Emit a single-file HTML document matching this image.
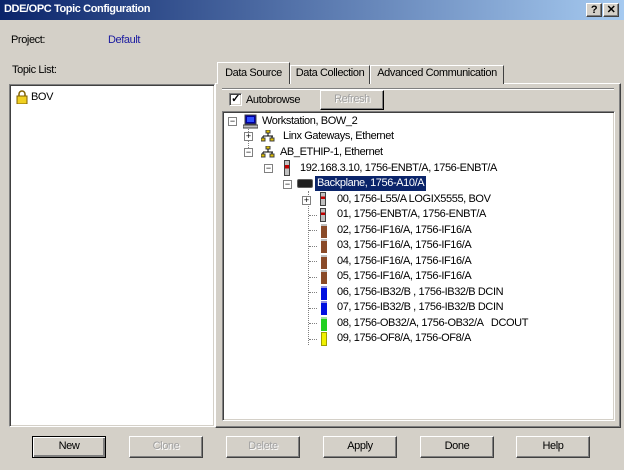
<!DOCTYPE html>
<html><head><style>
*{margin:0;padding:0;box-sizing:border-box}
body{width:624px;height:470px;background:#d4d0c8;font:11px "Liberation Sans",sans-serif;letter-spacing:-0.4px;color:#000;position:relative;overflow:hidden}
.a{position:absolute;white-space:nowrap}
.sunk{position:absolute;background:#fff;border:1px solid;border-color:#808080 #fff #fff #808080;box-shadow:inset 1px 1px 0 #404040,inset -1px -1px 0 #d4d0c8}
.raised{position:absolute;border:1px solid;border-color:#fff #404040 #404040 #fff;box-shadow:inset -1px -1px 0 #808080}
.btn{position:absolute;top:436px;width:74px;height:22px;background:#d4d0c8;border:1px solid;border-color:#fff #404040 #404040 #fff;box-shadow:inset -1px -1px 0 #808080;text-align:center;line-height:19px}
.dis{color:#a0a0a0;text-shadow:1px 1px 0 #fff}
.tab{position:absolute;top:65px;height:19px;border:1px solid;border-bottom:none;border-color:#fff #404040 #fff #fff;line-height:15px;text-align:center;background:#d4d0c8}
.row{position:absolute;height:15px;line-height:15px}
.pm{position:absolute;width:9px;height:9px;border:1px solid #808080;background:#fff;font-size:9px;line-height:7px;text-align:center;color:#000;letter-spacing:0}
.mod{position:absolute;width:6px;height:14px}
.dl{position:absolute;border-left:1px dotted #808080}
.dh{position:absolute;border-top:1px dotted #808080;width:8px}
</style></head><body>
<div class="a" style="left:0;top:0;width:624px;height:20px;background:linear-gradient(90deg,#0a246a,#a6caf0)"></div>
<div class="a" style="left:4px;top:3px;color:#fff;font-weight:bold;font-size:11px">DDE/OPC Topic Configuration</div>
<div class="raised" style="left:586px;top:3px;width:16px;height:14px;background:#d4d0c8;text-align:center;font-weight:bold;line-height:12px">?</div>
<div class="raised" style="left:603px;top:3px;width:16px;height:14px;background:#d4d0c8;text-align:center;font-weight:bold;line-height:12px">✕</div>
<div class="a" style="left:11px;top:34px">Project:</div>
<div class="a" style="left:108px;top:34px;color:#1a1aa0">Default</div>
<div class="a" style="left:12px;top:64px">Topic List:</div>
<div class="sunk" style="left:9px;top:84px;width:206px;height:343px"></div>
<div class="a" style="left:16px;top:90px;width:12px;height:14px"><svg width="12" height="14"><path d="M3 6V4a3 3 0 0 1 6 0v2" stroke="#806000" stroke-width="1.5" fill="none"/><rect x="1" y="6" width="10" height="8" fill="#f0d020" stroke="#806000"/></svg></div>
<div class="a" style="left:31px;top:91px">BOV</div>
<div class="raised" style="left:215px;top:83px;width:406px;height:345px;border-top:1px solid #fff"></div>
<div class="tab" style="left:290px;width:80px">Data Collection</div>
<div class="tab" style="left:370px;width:134px;border-right-color:#404040">Advanced Communication</div>
<div class="tab" style="left:217px;top:62px;width:73px;height:22px;line-height:20px;z-index:2">Data Source</div>
<div class="a" style="left:222px;top:88px;width:392px;border-top:1px solid #808080;border-bottom:1px solid #fff;height:2px"></div>
<div class="sunk" style="left:229px;top:93px;width:13px;height:13px;font-size:11px;line-height:10px;text-align:center;font-weight:bold">✓</div>
<div class="a" style="left:246px;top:94px">Autobrowse</div>
<div class="raised" style="left:320px;top:90px;width:64px;height:20px;text-align:center;line-height:17px;border-color:#fff #000 #000 #fff"><span class="dis">Refresh</span></div>
<div class="sunk" style="left:222px;top:111px;width:393px;height:310px"></div>

<div class="pm" style="left:228px;top:117px">−</div>
<div class="a" style="left:243px;top:114px"><svg width="15" height="15"><rect x="2" y="1" width="11" height="9" fill="#0000a0" stroke="#404040"/><rect x="4" y="3" width="7" height="5" fill="#3050ff"/><rect x="0" y="11" width="15" height="3" fill="#c0c0c0" stroke="#404040"/></svg></div>
<div class="row" style="left:262px;top:114px">Workstation, BOW_2</div>
<div class="dl" style="left:248px;top:129px;height:27px"></div>
<div class="pm" style="left:244px;top:132px">+</div>
<div class="a" style="left:261px;top:130px"><svg width="14" height="13"><g fill="#e0c000" stroke="#404040"><rect x="5" y="0" width="4" height="3"/><rect x="0" y="8" width="4" height="3"/><rect x="9" y="8" width="4" height="3"/></g><path d="M7 3v3M2 6h10M2 6v2M11 6v2" stroke="#000"/></svg></div>
<div class="row" style="left:283px;top:129px">Linx Gateways, Ethernet</div>
<div class="pm" style="left:244px;top:148px">−</div>
<div class="a" style="left:261px;top:146px"><svg width="14" height="13"><g fill="#e0c000" stroke="#404040"><rect x="5" y="0" width="4" height="3"/><rect x="0" y="8" width="4" height="3"/><rect x="9" y="8" width="4" height="3"/></g><path d="M7 3v3M2 6h10M2 6v2M11 6v2" stroke="#000"/></svg></div>
<div class="row" style="left:280px;top:145px">AB_ETHIP-1, Ethernet</div>
<div class="pm" style="left:264px;top:164px">−</div>
<div class="a" style="left:284px;top:160px;width:6px;height:16px;background:linear-gradient(#c0c0c0 0 30%,#c00000 30% 55%,#c0c0c0 55%);border:1px solid #404040"></div>
<div class="row" style="left:300px;top:161px">192.168.3.10, 1756-ENBT/A, 1756-ENBT/A</div>
<div class="pm" style="left:283px;top:180px">−</div>
<div class="a" style="left:297px;top:179px;width:16px;height:9px;background:#202020;border-radius:2px;border:1px solid #606060"></div>
<div class="row" style="left:315px;top:176px;background:#0a246a;color:#fff;padding:0 2px">Backplane, 1756-A10/A</div>
<div class="dl" style="left:308px;top:191px;height:154px"></div>
<div class="pm" style="left:302px;top:196px">+</div>

<div class="mod" style="left:320px;top:192px;background:linear-gradient(#c0c0c0 0 30%,#c00000 30% 50%,#c0c0c0 50%);border:1px solid #404040"></div>
<div class="row" style="left:337px;top:192px">00, 1756-L55/A LOGIX5555, BOV</div>
<div class="dh" style="left:309px;top:215px"></div>
<div class="mod" style="left:320px;top:208px;background:linear-gradient(#c0c0c0 0 30%,#c00000 30% 50%,#c0c0c0 50%);border:1px solid #404040"></div>
<div class="row" style="left:337px;top:207px">01, 1756-ENBT/A, 1756-ENBT/A</div>
<div class="dh" style="left:309px;top:230px"></div><div class="mod" style="left:321px;top:224px;background:#8a4a28;border-top:2px solid #c0c0c0"></div>
<div class="row" style="left:337px;top:223px">02, 1756-IF16/A, 1756-IF16/A</div>
<div class="dh" style="left:309px;top:246px"></div><div class="mod" style="left:321px;top:239px;background:#8a4a28;border-top:2px solid #c0c0c0"></div>
<div class="row" style="left:337px;top:238px">03, 1756-IF16/A, 1756-IF16/A</div>
<div class="dh" style="left:309px;top:261px"></div><div class="mod" style="left:321px;top:255px;background:#8a4a28;border-top:2px solid #c0c0c0"></div>
<div class="row" style="left:337px;top:254px">04, 1756-IF16/A, 1756-IF16/A</div>
<div class="dh" style="left:309px;top:277px"></div><div class="mod" style="left:321px;top:270px;background:#8a4a28;border-top:2px solid #c0c0c0"></div>
<div class="row" style="left:337px;top:269px">05, 1756-IF16/A, 1756-IF16/A</div>
<div class="dh" style="left:309px;top:292px"></div><div class="mod" style="left:321px;top:286px;background:#0010e0;border-top:2px solid #9090e0"></div>
<div class="row" style="left:337px;top:285px">06, 1756-IB32/B , 1756-IB32/B DCIN</div>
<div class="dh" style="left:309px;top:308px"></div><div class="mod" style="left:321px;top:301px;background:#0010e0;border-top:2px solid #9090e0"></div>
<div class="row" style="left:337px;top:300px">07, 1756-IB32/B , 1756-IB32/B DCIN</div>
<div class="dh" style="left:309px;top:323px"></div><div class="mod" style="left:321px;top:317px;background:#20d020;border-top:2px solid #a0e0a0"></div>
<div class="row" style="left:337px;top:316px">08, 1756-OB32/A, 1756-OB32/A &nbsp; DCOUT</div>
<div class="dh" style="left:309px;top:339px"></div><div class="mod" style="left:321px;top:332px;background:#f0f000;border:1px solid #a0a000"></div>
<div class="row" style="left:337px;top:331px">09, 1756-OF8/A, 1756-OF8/A</div>

<div class="btn" style="left:32px;border-color:#000;box-shadow:inset 1px 1px 0 #fff,inset -2px -2px 0 #808080">New</div>
<div class="btn dis" style="left:129px">Clone</div>
<div class="btn dis" style="left:226px">Delete</div>
<div class="btn" style="left:323px">Apply</div>
<div class="btn" style="left:420px">Done</div>
<div class="btn" style="left:516px">Help</div>
</body></html>
